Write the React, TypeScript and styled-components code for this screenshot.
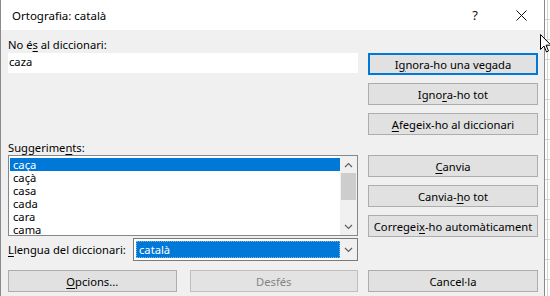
import React from "react";
import styled, { createGlobalStyle } from "styled-components";

const GlobalStyles = createGlobalStyle`
  * { box-sizing: border-box; }
  body {
    margin: 0;
    padding: 0;
    background: #ffffff;
    font-family: 'Segoe UI', 'Noto Sans', sans-serif;
    font-size: 11.2px;
    color: #000;
  }
`;

const Screen = styled.div`
  position: relative;
  display: flex;
  width: 550px;
  height: 296px;
  overflow: hidden;
`;

const Dialog = styled.div`
  width: 545px;
  height: 296px;
  display: flex;
  flex-direction: column;
  border-left: 1px solid #8a8a8a;
  border-right: 1px solid #8a8a8a;
  background: #f0f0f0;
`;

const Sheet = styled.div`
  flex: 1;
  background-color: #ffffff;
  background-image: repeating-linear-gradient(
      to bottom,
      transparent 0,
      transparent 19px,
      #d4d4d4 19px,
      #d4d4d4 20px
    ),
    linear-gradient(to right, transparent 2px, #d4d4d4 2px, #d4d4d4 3px, transparent 3px);
`;

const TitleBar = styled.div`
  height: 30px;
  display: flex;
  align-items: center;
  background: #ffffff;
  padding-left: 11px;
`;

const Title = styled.div`
  flex: 1;
  font-size: 11.5px;
`;

const TitleButton = styled.div`
  width: 46px;
  height: 30px;
  display: flex;
  align-items: center;
  justify-content: center;
  font-size: 13px;
  color: #111;
`;

const Body = styled.div`
  flex: 1;
  display: flex;
  flex-direction: column;
  padding: 0 6px 0 7px;
`;

const Top = styled.div`
  display: flex;
  gap: 10px;
`;

const LeftCol = styled.div`
  width: 350px;
  display: flex;
  flex-direction: column;
`;

const RightCol = styled.div`
  width: 170px;
  display: flex;
  flex-direction: column;
  gap: 8px;
  padding-top: 23px;
`;

const Label = styled.div<{ $top: number }>`
  height: 15px;
  line-height: 15px;
  margin-top: ${(p) => p.$top}px;
  white-space: nowrap;
`;

const Key = styled.span`
  text-decoration: underline;
  text-underline-offset: 2px;
`;

const TextField = styled.div`
  margin-top: 1px;
  height: 20px;
  line-height: 17px;
  padding-left: 1px;
  background: #ffffff;
`;

const Button = styled.div<{ $focused?: boolean; $disabled?: boolean; $gapBefore?: number }>`
  height: 22px;
  display: flex;
  align-items: center;
  justify-content: center;
  background: #e1e1e1;
  border: ${(p) => (p.$focused ? "2px solid #0078d7" : "1px solid #adadad")};
  color: ${(p) => (p.$disabled ? "#838383" : "#000")};
  ${(p) => p.$disabled && "border-color: #bfbfbf; background: #e3e3e3;"}
  margin-top: ${(p) => p.$gapBefore ?? 0}px;
  white-space: nowrap;
`;

const ListBox = styled.div`
  height: 81px;
  border: 1px solid #828790;
  background: #ffffff;
  display: flex;
`;

const Items = styled.div`
  flex: 1;
  padding: 2px 0 0 1px;
  overflow: hidden;
`;

const Item = styled.div<{ $selected?: boolean }>`
  height: 13px;
  line-height: 13px;
  padding-left: 3px;
  background: ${(p) => (p.$selected ? "#0078d7" : "transparent")};
  color: ${(p) => (p.$selected ? "#ffffff" : "#000")};
`;

const ScrollBar = styled.div`
  width: 17px;
  display: flex;
  flex-direction: column;
  background: #f0f0f0;
`;

const ScrollArrow = styled.div`
  height: 17px;
  display: flex;
  align-items: center;
  justify-content: center;
`;

const Thumb = styled.div`
  height: 27px;
  margin: 0 1px;
  background: #cdcdcd;
`;

const Track = styled.div`
  flex: 1;
`;

const ComboRow = styled.div`
  margin-top: 2px;
  height: 23px;
  display: flex;
  align-items: center;
`;

const ComboLabel = styled.div`
  width: 125px;
  white-space: nowrap;
`;

const Combo = styled.div`
  flex: 1;
  height: 23px;
  display: flex;
  border: 1px solid #7a7a7a;
  background: #ffffff;
  padding: 2px 0 2px 2px;
`;

const ComboValue = styled.div`
  flex: 1;
  background: #0078d7;
  color: #ffffff;
  line-height: 17px;
  padding-left: 3px;
  outline: 1px dotted #7fb6e8;
  outline-offset: -1px;
`;

const ComboArrow = styled.div`
  width: 17px;
  display: flex;
  align-items: center;
  justify-content: center;
  background: #f0f0f0;
  margin: -2px 0;
`;

const BottomRow = styled.div`
  margin-top: 9px;
  display: flex;
  gap: 10px;
`;

const BottomLeft = styled.div`
  width: 350px;
  display: flex;
  gap: 13px;
  & > * {
    flex: 1;
  }
`;

const BottomRight = styled.div`
  width: 170px;
  display: flex;
  flex-direction: column;
`;

const Cursor = styled.svg`
  position: absolute;
  left: 540px;
  top: 34px;
`;

const Chevron = ({ up }: { up?: boolean }) => (
  <svg width="9" height="6" viewBox="0 0 9 6">
    <path
      d={up ? "M1 5 L4.5 1.5 L8 5" : "M1 1 L4.5 4.5 L8 1"}
      fill="none"
      stroke="#606060"
      strokeWidth="1.2"
    />
  </svg>
);

const suggestions = ["caça", "caçà", "casa", "cada", "cara", "cama"];

export default function App() {
  return (
    <>
      <GlobalStyles />
      <Screen>
        <Dialog>
          <TitleBar>
            <Title>Ortografia: català</Title>
            <TitleButton>?</TitleButton>
            <TitleButton>
              <svg width="11" height="11" viewBox="0 0 11 11">
                <path d="M0.5 0.5 L10.5 10.5 M10.5 0.5 L0.5 10.5" stroke="#111" strokeWidth="1" />
              </svg>
            </TitleButton>
          </TitleBar>
          <Body>
            <Top>
              <LeftCol>
                <Label $top={7}>
                  No é<Key>s</Key> al diccionari:
                </Label>
                <TextField>caza</TextField>
                <Label $top={67}>
                  Suggerime<Key>n</Key>ts:
                </Label>
                <ListBox>
                  <Items>
                    {suggestions.map((s, i) => (
                      <Item key={s} $selected={i === 0}>
                        {s}
                      </Item>
                    ))}
                  </Items>
                  <ScrollBar>
                    <ScrollArrow>
                      <Chevron up />
                    </ScrollArrow>
                    <Thumb />
                    <Track />
                    <ScrollArrow>
                      <Chevron />
                    </ScrollArrow>
                  </ScrollBar>
                </ListBox>
                <ComboRow>
                  <ComboLabel>
                    <Key>L</Key>lengua del diccionari:
                  </ComboLabel>
                  <Combo>
                    <ComboValue>català</ComboValue>
                    <ComboArrow>
                      <Chevron />
                    </ComboArrow>
                  </Combo>
                </ComboRow>
              </LeftCol>
              <RightCol>
                <Button $focused>
                  I<Key>g</Key>nora-ho una vegada
                </Button>
                <Button>
                  Igno<Key>r</Key>a-ho tot
                </Button>
                <Button>
                  <Key>A</Key>fegeix-ho al diccionari
                </Button>
                <Button $gapBefore={12}>
                  <Key>C</Key>anvia
                </Button>
                <Button>
                  Canvia-<Key>h</Key>o tot
                </Button>
                <Button>
                  Corregei<Key>x</Key>-ho automàticament
                </Button>
              </RightCol>
            </Top>
            <BottomRow>
              <BottomLeft>
                <Button>
                  <Key>O</Key>pcions...
                </Button>
                <Button $disabled>Desfés</Button>
              </BottomLeft>
              <BottomRight>
                <Button>Cancel·la</Button>
              </BottomRight>
            </BottomRow>
          </Body>
        </Dialog>
        <Sheet />
        <Cursor width="12" height="19" viewBox="0 0 12 19">
          <path d="M0.5 0.5 L0.5 15.5 L4 12 L6.5 18 L8.5 17 L6 11.2 L11 11.2 Z" fill="#fff" stroke="#000" strokeWidth="1" />
        </Cursor>
      </Screen>
    </>
  );
}
